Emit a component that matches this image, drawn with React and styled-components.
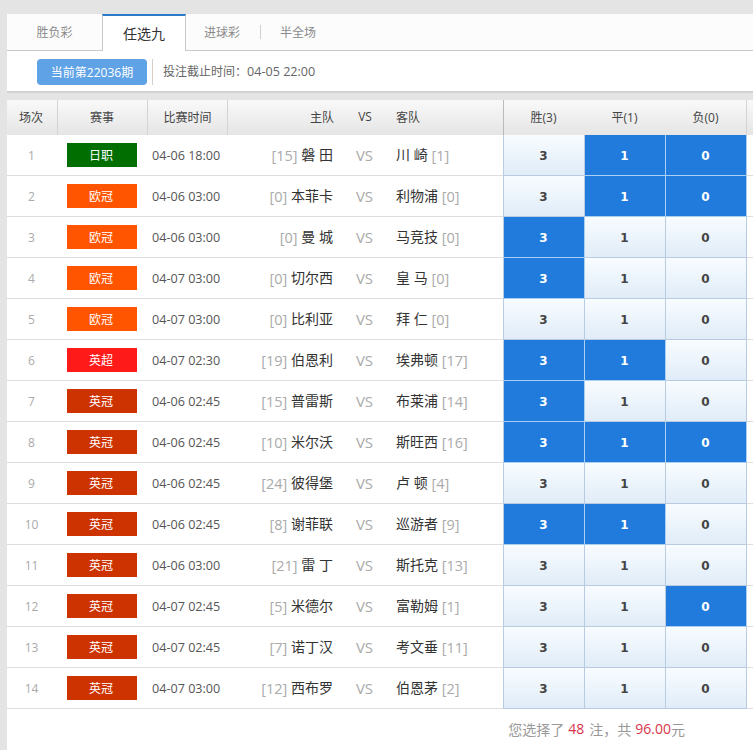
import React from 'react';
import styled, { createGlobalStyle } from 'styled-components';

const GlobalStyle = createGlobalStyle`
    html, body {
        margin: 0;
        padding: 0;
        background: #e4e4e4;
    }
    body {
        font-family: "Open Sans", "Noto Sans CJK SC", sans-serif;
        font-size: 13px;
    }
`;

const Page = styled.div`
    padding: 14px 0 0 7px;
    width: 746px;
    height: 736px;
    overflow: hidden;
`;

const TabBar = styled.nav`
    display: flex;
    align-items: stretch;
    height: 36px;
    background: #fcfcfc;
    border-bottom: 1px solid #c8c8c8;
`;

const Tab = styled.a`
    width: ${props => props.$width}px;
    display: flex;
    align-items: center;
    justify-content: center;
    color: #8a8a8a;
    font-size: 12px;
    padding: 0 ${props => props.$shift ?? 0}px 1px 0;
    box-sizing: border-box;
`;

const ActiveTab = styled.a`
    width: 84px;
    height: 37px;
    box-sizing: border-box;
    display: flex;
    align-items: center;
    justify-content: center;
    color: #333;
    font-size: 14px;
    background: #fff;
    border-top: 2px solid #2a7cc9;
    border-left: 1px solid #c8c8c8;
    border-right: 1px solid #c8c8c8;
    padding-bottom: 2px;
`;

const TabDivider = styled.span`
    width: 1px;
    height: 14px;
    margin-top: 11px;
    background: #d0d0d0;
`;

const InfoBar = styled.div`
    display: flex;
    align-items: flex-start;
    height: 32px;
    padding: 8px 0 0 30px;
    background: #fff;
    border-bottom: 2px solid #d2d2d2;
`;

const IssueButton = styled.button`
    width: 110px;
    height: 26px;
    padding: 0;
    border: 0;
    border-radius: 4px;
    background: #5fa3e6;
    color: #fff;
    font-family: inherit;
    font-size: 12px;
`;

const Deadline = styled.span`
    margin-left: 5px;
    padding-left: 10px;
    line-height: 26px;
    border-left: 1px solid #d8d0c8;
    color: #666;
    font-size: 12px;
`;

const DeadlineTime = styled.span`
    font-size: 12.6px;
`;

const Table = styled.section`
    margin-top: 7px;
    background: #fff;
`;

const columns = '51px 90px 80px 112px 50px 113px 82px 81px 81px 6px';

const HeadRow = styled.div`
    display: grid;
    grid-template-columns: ${columns};
    height: 35px;
    background: linear-gradient(#f9f9f9, #e5e5e5);
`;

const HeadCell = styled.div`
    display: flex;
    align-items: center;
    justify-content: ${props => props.$align ?? 'center'};
    padding: ${props => props.$pad ?? '0'};
    padding-bottom: 2px;
    box-sizing: border-box;
    color: #444;
    font-size: 12px;
    border-left: ${props => (props.$line ? `1px solid ${props.$line}` : '0')};
    border-right: ${props => (props.$rightLine ? `1px solid ${props.$rightLine}` : '0')};
`;

const Row = styled.div`
    display: grid;
    grid-template-columns: ${columns};
    height: 41px;
    box-sizing: border-box;
    border-bottom: 1px solid #dedede;
`;

const Cell = styled.div`
    display: flex;
    align-items: center;
    justify-content: ${props => props.$align ?? 'center'};
    padding: ${props => props.$pad ?? '0'};
    color: ${props => props.$color ?? '#555'};
    font-size: ${props => props.$size ?? '12px'};
    white-space: pre;
`;

const League = styled.span`
    width: 70px;
    height: 24px;
    box-sizing: border-box;
    padding-right: 2px;
    display: flex;
    align-items: center;
    justify-content: center;
    background: ${props => props.$bg};
    color: #fff;
    font-size: 12px;
`;

const Team = styled.span`
    color: #333;
    font-size: 14px;
    margin-bottom: 2px;
`;

const Rank = styled.span`
    color: #aaa;
    font-size: 14.5px;
`;

const Pick = styled.div`
    display: flex;
    align-items: center;
    justify-content: center;
    box-sizing: border-box;
    height: 41px;
    margin-bottom: -1px;
    padding: 1px 1px 0 0;
    font-family: "DejaVu Sans", sans-serif;
    font-weight: bold;
    font-size: 12px;
    color: ${props => (props.$on ? '#fff' : '#444')};
    background: ${props => (props.$on ? '#207bdc' : 'linear-gradient(#f8fcff, #e0ecf8)')};
    border-right: 1px solid ${props => (props.$on ? '#a9cff3' : '#b9cbe0')};
    border-bottom: 1px solid ${props => (props.$on ? '#a9cff3' : '#b9cbe0')};
    border-left: ${props => (props.$first ? '1px solid #b9cbe0' : '0')};
`;

const Footer = styled.div`
    display: flex;
    justify-content: flex-end;
    align-items: center;
    box-sizing: border-box;
    height: 41px;
    padding: 0 68px 2px 0;
    background: #fff;
    color: #999;
    font-size: 14px;
`;

const Red = styled.em`
    font-style: normal;
    color: #d8344a;
    margin: ${props => props.$margin ?? '0'};
`;

const JAPAN = '#006e00';
const UCL = '#ff5400';
const EPL = '#ff1a1a';
const CHAMP = '#cc3300';

const matches = [
    { id: 1, league: '日职', bg: JAPAN, time: '04-06 18:00', homeRank: 15, home: '磐 田', away: '川 崎', awayRank: 1, picks: [0, 1, 1] },
    { id: 2, league: '欧冠', bg: UCL, time: '04-06 03:00', homeRank: 0, home: '本菲卡', away: '利物浦', awayRank: 0, picks: [0, 1, 1] },
    { id: 3, league: '欧冠', bg: UCL, time: '04-06 03:00', homeRank: 0, home: '曼 城', away: '马竞技', awayRank: 0, picks: [1, 0, 0] },
    { id: 4, league: '欧冠', bg: UCL, time: '04-07 03:00', homeRank: 0, home: '切尔西', away: '皇 马', awayRank: 0, picks: [1, 0, 0] },
    { id: 5, league: '欧冠', bg: UCL, time: '04-07 03:00', homeRank: 0, home: '比利亚', away: '拜 仁', awayRank: 0, picks: [0, 0, 0] },
    { id: 6, league: '英超', bg: EPL, time: '04-07 02:30', homeRank: 19, home: '伯恩利', away: '埃弗顿', awayRank: 17, picks: [1, 1, 0] },
    { id: 7, league: '英冠', bg: CHAMP, time: '04-06 02:45', homeRank: 15, home: '普雷斯', away: '布莱浦', awayRank: 14, picks: [1, 0, 0] },
    { id: 8, league: '英冠', bg: CHAMP, time: '04-06 02:45', homeRank: 10, home: '米尔沃', away: '斯旺西', awayRank: 16, picks: [1, 1, 1] },
    { id: 9, league: '英冠', bg: CHAMP, time: '04-06 02:45', homeRank: 24, home: '彼得堡', away: '卢 顿', awayRank: 4, picks: [0, 0, 0] },
    { id: 10, league: '英冠', bg: CHAMP, time: '04-06 02:45', homeRank: 8, home: '谢菲联', away: '巡游者', awayRank: 9, picks: [1, 1, 0] },
    { id: 11, league: '英冠', bg: CHAMP, time: '04-06 03:00', homeRank: 21, home: '雷 丁', away: '斯托克', awayRank: 13, picks: [0, 0, 0] },
    { id: 12, league: '英冠', bg: CHAMP, time: '04-07 02:45', homeRank: 5, home: '米德尔', away: '富勒姆', awayRank: 1, picks: [0, 0, 1] },
    { id: 13, league: '英冠', bg: CHAMP, time: '04-07 02:45', homeRank: 7, home: '诺丁汉', away: '考文垂', awayRank: 11, picks: [0, 0, 0] },
    { id: 14, league: '英冠', bg: CHAMP, time: '04-07 03:00', homeRank: 12, home: '西布罗', away: '伯恩茅', awayRank: 2, picks: [0, 0, 0] },
];

const PICK_VALUES = [3, 1, 0];

const App = () => (
    <Page>
        <GlobalStyle />
        <TabBar>
            <Tab $width={95}>胜负彩</Tab>
            <ActiveTab>任选九</ActiveTab>
            <Tab $width={74} $shift={2}>进球彩</Tab>
            <TabDivider />
            <Tab $width={74}>半全场</Tab>
        </TabBar>
        <InfoBar>
            <IssueButton>当前第22036期</IssueButton>
            <Deadline>投注截止时间：<DeadlineTime>04-05 22:00</DeadlineTime></Deadline>
        </InfoBar>
        <Table>
            <HeadRow>
                <HeadCell $rightLine="#d4d4d4" $pad="0 2px 0 0">场次</HeadCell>
                <HeadCell $rightLine="#d4d4d4" $pad="0 1px 0 0">赛事</HeadCell>
                <HeadCell $rightLine="#d4d4d4">比赛时间</HeadCell>
                <HeadCell $align="flex-end" $pad="0 6px 0 0">主队</HeadCell>
                <HeadCell>VS</HeadCell>
                <HeadCell $align="flex-start" $pad="0 0 0 6px">客队</HeadCell>
                <HeadCell $line="#bbb" $pad="0 2px 0 0">胜(3)</HeadCell>
                <HeadCell $pad="0 2px 0 0">平(1)</HeadCell>
                <HeadCell $rightLine="#d4d4d4" $pad="0 1px 0 0">负(0)</HeadCell>
                <div />
            </HeadRow>
            {matches.map(match => (
                <Row key={match.id}>
                    <Cell $color="#aaa" $pad="0 2px 0 0">{match.id}</Cell>
                    <Cell $pad="0 2px 0 0"><League $bg={match.bg}>{match.league}</League></Cell>
                    <Cell $align="flex-start" $pad="0 0 0 4px" $size="12.6px">{match.time}</Cell>
                    <Cell $align="flex-end" $pad="0 7px 0 0">
                        <Rank>[{match.homeRank}] </Rank><Team>{match.home}</Team>
                    </Cell>
                    <Cell $color="#aaa" $size="15px" $pad="0 1px 0 0">VS</Cell>
                    <Cell $align="flex-start" $pad="0 0 0 6px">
                        <Team>{match.away}</Team><Rank> [{match.awayRank}]</Rank>
                    </Cell>
                    {PICK_VALUES.map((value, i) => (
                        <Pick key={value} $first={i === 0} $on={match.picks[i] === 1}>{value}</Pick>
                    ))}
                    <div />
                </Row>
            ))}
        </Table>
        <Footer>
            您选择了<Red $margin="0 5px 0 4px">48</Red>注，共<Red $margin="0 0 0 4px">96.00</Red>元
        </Footer>
    </Page>
);

export default App;
